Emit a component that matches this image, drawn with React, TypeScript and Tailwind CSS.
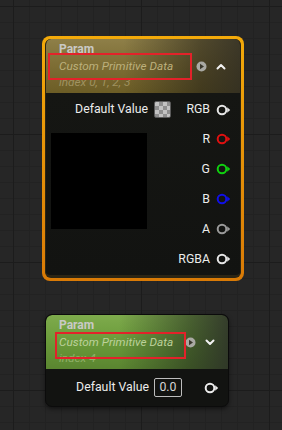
import React from 'react'

const font = { fontFamily: 'Roboto, "Noto Sans", sans-serif' }

function Pin({ color }: { color: string }) {
    return (
        <svg width="15" height="12" viewBox="0 0 15 12" className="shrink-0">
            <circle cx="6" cy="6" r="4.3" fill="none" stroke={color} strokeWidth="2" />
            <path d="M11.2 3.2 L14.2 6 L11.2 8.8 Z" fill={color} />
        </svg>
    )
}

function PlayIcon() {
    return (
        <svg width="11" height="11" viewBox="0 0 11 11" className="shrink-0">
            <circle cx="5.5" cy="5.5" r="5" fill="#a9a9a3" />
            <path d="M4 2.8 L8 5.5 L4 8.2 Z" fill="#3a382c" />
        </svg>
    )
}

function Chevron({ up }: { up?: boolean }) {
    return (
        <svg width="10" height="7" viewBox="0 0 10 7" className="shrink-0">
            <path
                d={up ? 'M1.5 5.5 L5 2 L8.5 5.5' : 'M1.5 1.5 L5 5 L8.5 1.5'}
                fill="none"
                stroke="#f2f2f2"
                strokeWidth="2"
                strokeLinecap="round"
                strokeLinejoin="round"
            />
        </svg>
    )
}

function Header({ index, tone }: { index: string; tone: 'gold' | 'green' }) {
    const gold = tone === 'gold'
    return (
        <div
            className={
                'relative h-[54px] pl-[13px] pt-[2px] ' +
                (gold
                    ? 'rounded-t-[5px] bg-[linear-gradient(90deg,rgba(0,0,0,0)_0%,rgba(0,0,0,0)_40%,rgba(30,28,22,0.55)_80%,rgba(40,38,32,0.8)_100%),linear-gradient(to_bottom,#8e7f48_0%,#7d6d34_50%,#6c5d26_100%)]'
                    : 'rounded-t-[6px] bg-[linear-gradient(90deg,rgba(0,0,0,0)_0%,rgba(0,0,0,0)_40%,rgba(30,34,28,0.55)_80%,rgba(40,42,38,0.85)_100%),linear-gradient(to_bottom,#7eab4c_0%,#6a9a3a_50%,#5a8530_100%)]')
            }
        >
            <div className="text-[12px] leading-[16px] font-bold text-[#c9c9c5]">Param</div>
            <div
                className={
                    'text-[11.8px] leading-[18px] italic ' + (gold ? 'text-[#bcb07c]' : 'text-[#bcd09a]')
                }
            >
                Custom Primitive Data
            </div>
            <div
                className={
                    'text-[11.8px] leading-[14px] italic ' + (gold ? 'text-[#a09260]' : 'text-[#8fb068]')
                }
            >
                {index}
            </div>
            <div
                className={
                    'absolute flex items-center gap-[9px] ' +
                    (gold ? 'left-[150px] top-[22px]' : 'left-[139px] top-[22px]')
                }
            >
                <PlayIcon />
                <Chevron up={gold} />
            </div>
            <div
                className={
                    'absolute border-2 border-[#e3222a] ' +
                    (gold
                        ? 'left-[2px] top-[14px] w-[144px] h-[27px]'
                        : 'left-[9px] top-[17px] w-[131px] h-[27px]')
                }
            />
        </div>
    )
}

const pins = [
    { label: 'R', color: '#e01010' },
    { label: 'G', color: '#10d010' },
    { label: 'B', color: '#1010e8' },
    { label: 'A', color: '#9a9a9a' },
    { label: 'RGBA', color: '#e6e6e6' },
]

export default function App() {
    return (
        <div
            style={font}
            className="w-[282px] h-[430px] overflow-hidden bg-[#262626] bg-[linear-gradient(to_right,#1c1c1c_1px,transparent_1px),linear-gradient(to_bottom,#1c1c1c_1px,transparent_1px),linear-gradient(to_right,#222222_1px,transparent_1px),linear-gradient(to_bottom,#222222_1px,transparent_1px)] bg-size-[128px_128px,128px_128px,16px_16px,16px_16px] bg-position-[13px_6px]"
        >
            <div className="flex flex-col items-start pt-[36px] pl-[42px]">
                {/* selected node */}
                <div className="w-[202px] rounded-[8px] p-[3px] bg-[linear-gradient(to_bottom,#f3aa0a,#d97a06)]">
                    <div className="rounded-[6px] overflow-hidden bg-[#151613] border-b-[3px] border-x-[1px] border-[#2c2514]">
                        <Header index="index 0, 1, 2, 3" tone="gold" />
                        <div className="flex pt-[2px] pb-[1px] bg-[linear-gradient(to_bottom,#151613,#121311)]">
                            <div className="w-[125px] pl-[5px]">
                                <div className="h-[29px] flex items-center justify-end gap-[6px]">
                                    <span className="text-[12.3px] text-[#ececec]">Default Value</span>
                                    <div className="w-[17px] h-[17px] rounded-[2px] border border-[#5a5a5a] bg-[conic-gradient(#8f8f8f_25%,#c2c2c2_0_50%,#8f8f8f_0_75%,#c2c2c2_0)] bg-size-[8px_8px]" />
                                </div>
                                <div className="mt-[9px] w-[96px] h-[96px] bg-black" />
                            </div>
                            <div className="flex-1 flex flex-col items-end pr-[9px]">
                                <div className="h-[29px] flex items-center gap-[6px]">
                                    <span className="text-[12.3px] text-[#ececec]">RGB</span>
                                    <Pin color="#e6e6e6" />
                                </div>
                                {pins.map((p) => (
                                    <div key={p.label} className="h-[30px] flex items-center gap-[6px]">
                                        <span className="text-[12.3px] text-[#ececec]">{p.label}</span>
                                        <Pin color={p.color} />
                                    </div>
                                ))}
                            </div>
                        </div>
                    </div>
                </div>

                {/* second node */}
                <div className="mt-[33px] ml-[3px] w-[184px] rounded-[7px] border border-[#0b0b0b] bg-[#121311] overflow-hidden shadow-[0_2px_4px_rgba(0,0,0,0.5)]">
                    <Header index="index 4" tone="green" />
                    <div className="h-[37px] flex items-center">
                        <div className="w-[136px] flex items-center justify-end gap-[5px]">
                            <span className="text-[12.3px] text-[#ececec]">Default Value</span>
                            <div className="w-[28px] h-[19px] rounded-[2px] border border-[#bdbdbd] flex items-center justify-center text-[12.3px] text-[#d6d6d6]">
                                0.0
                            </div>
                        </div>
                        <div className="ml-[22px]">
                            <Pin color="#ececec" />
                        </div>
                    </div>
                </div>
            </div>
        </div>
    )
}
